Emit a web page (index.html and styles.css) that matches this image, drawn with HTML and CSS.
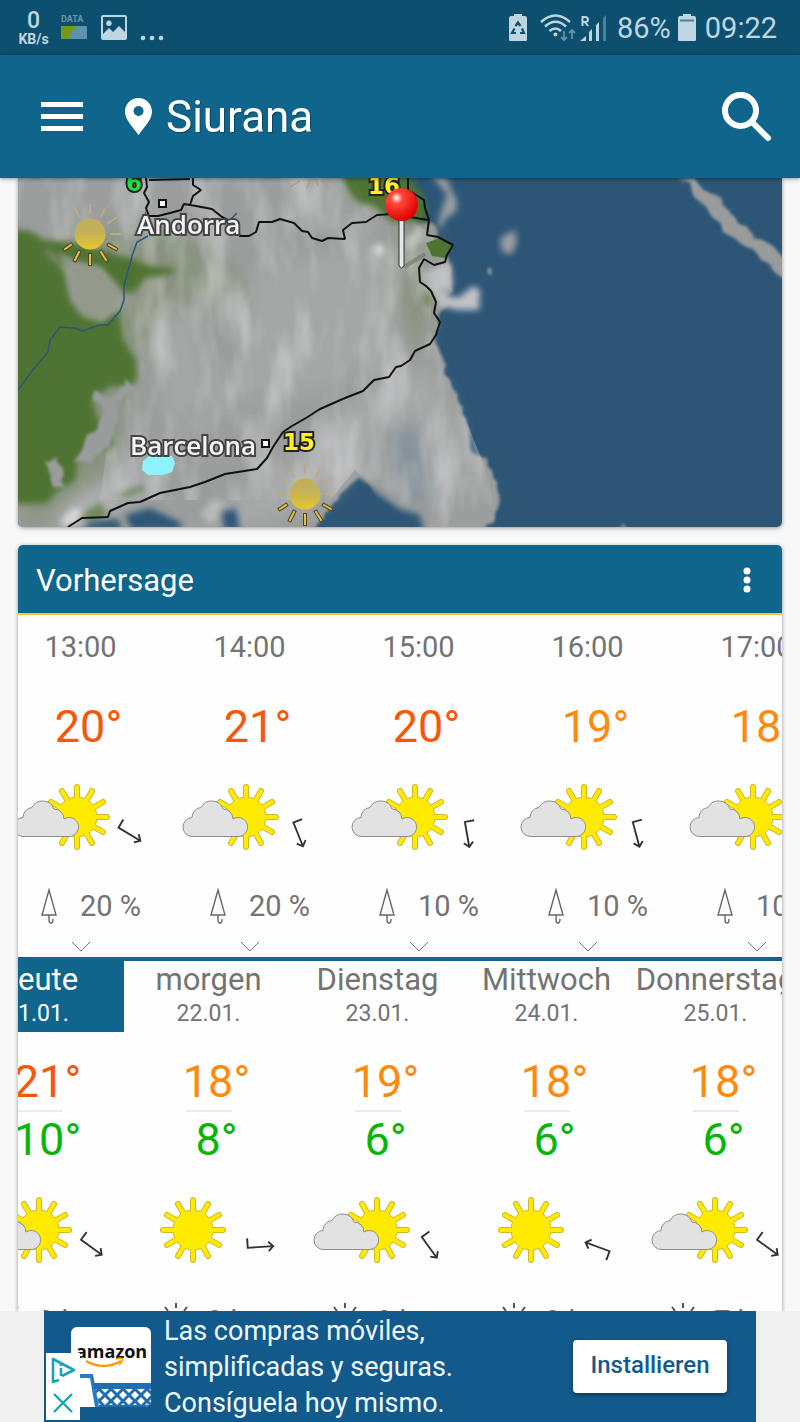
FILE: index.html
```
<!DOCTYPE html>
<html lang="de">
<head>
    <meta charset="UTF-8">
    <meta name="viewport" content="width=device-width, initial-scale=1.0">
    <title>Siurana - Vorhersage</title>
    <link rel="stylesheet" href="styles.css">
</head>
<body>
    <!-- shared icons -->
    <svg class="sprite" aria-hidden="true">
        <symbol id="sun" viewBox="-34 -34 68 68">
            <g id="rays">
                <path id="ray-pair" d="M0 -30V30"/>
                <use href="#ray-pair" transform="rotate(30)"/>
                <use href="#ray-pair" transform="rotate(60)"/>
                <use href="#ray-pair" transform="rotate(90)"/>
                <use href="#ray-pair" transform="rotate(120)"/>
                <use href="#ray-pair" transform="rotate(150)"/>
            </g>
        </symbol>
        <symbol id="clear" viewBox="0 0 100 68">
            <g transform="translate(49 34)">
                <use href="#rays" class="ray-edge"/>
                <circle r="20" class="sun-disc"/>
                <use href="#rays" class="ray-fill"/>
            </g>
        </symbol>
        <symbol id="cloudy" viewBox="0 0 100 68">
            <g transform="translate(64 34)">
                <use href="#rays" class="ray-edge"/>
                <circle r="20" class="sun-disc"/>
                <use href="#rays" class="ray-fill"/>
            </g>
            <path class="cloud" d="M11 53.500A9.500 9.500 0 0 1 10 34.500A10 10 0 0 1 19 24.500A12 12 0 0 1 41 26A10 10 0 0 1 51 36A9.500 9.500 0 1 1 56 53.500Z"/>
        </symbol>
        <symbol id="umbrella" viewBox="0 0 20 37">
            <path d="M10 2L3 27H17ZM10 27V32Q10 35 12 35T14 31" fill="none" stroke="#666" stroke-width="1.400"/>
        </symbol>
        <symbol id="hours" viewBox="0 0 34 37">
            <circle cx="17" cy="19" r="8" fill="none" stroke="#555" stroke-width="2"/>
            <path d="M17 0V5M17 31V36M0 19H5M29 19H34M6 4L9 8M28 4L25 8M6 32L9 28M28 32L24 28" stroke="#555" stroke-width="2"/>
        </symbol>
        <symbol id="arrow" viewBox="-16 -18 32 36" overflow="visible">
            <path d="M-13 -10V0H14M9 -5L14 0L9 5" fill="none" stroke="#333" stroke-width="2"/>
        </symbol>
        <symbol id="chevron" viewBox="0 0 20 11">
            <path d="M1 1L10 10L19 1" fill="none" stroke="#777"/>
        </symbol>
    </svg>

    <div class="statusbar">
        <div class="status-left">
            <div class="speed"><span class="speed-value">0</span><span class="speed-unit">KB/s</span></div>
            <div class="data"><span>DATA</span><i class="data-meter"></i></div>
            <svg width="26" height="26" viewBox="0 0 26 26"><path fill="#bfd6e2" fill-rule="evenodd" d="M2 0H24Q26 0 26 2V23Q26 25 24 25H2Q0 25 0 23V2Q0 0 2 0ZM2 2V19L8 13L12 17L18 11L24 17V2ZM8 5.500A2.800 2.800 0 1 1 7.900 5.500Z"/></svg>
            <svg class="more" width="24" height="6" viewBox="0 0 24 6" fill="#bfd6e2"><circle cx="3" cy="3" r="2.300"/><circle cx="12" cy="3" r="2.300"/><circle cx="21" cy="3" r="2.300"/></svg>
        </div>
        <div class="status-right">
            <svg width="20" height="28" viewBox="0 0 20 28">
                <path fill="#bfd6e2" d="M6 0H14V2H17Q19 2 19 4V26Q19 27 18 27H2Q1 27 1 26V4Q1 2 3 2H6Z"/>
                <path d="M7.500 12L10 8.500L12.500 12M14 14.500L16 19H12M8 19H4L6.500 14.500" fill="none" stroke="#0d4f6e" stroke-width="2.200"/>
            </svg>
            <svg class="wifi" width="36" height="28" viewBox="0 0 36 28" fill="none" stroke="#bfd6e2" stroke-width="2.400">
                <path d="M1 8Q15.500 -5 30 8M5 12.500Q15.500 3 26 12.500M9.500 17Q15.500 12 21 17"/>
                <circle cx="15.500" cy="20.500" r="2" fill="#bfd6e2" stroke="none"/>
                <path stroke="#5e93ad" stroke-width="1.800" d="M24 17V26M21 23L24 26L27 23M32 25V16M29 19L32 16L35 19"/>
            </svg>
            <svg class="signal" width="28" height="28" viewBox="0 0 28 28">
                <path d="M2.500 12V3H5Q8 3 8 5.500T5 8H2.500M5 8L8 12" fill="none" stroke="#bfd6e2" stroke-width="2"/>
                <path d="M0 27L6 22V27ZM9 18L12 15V27H9ZM16 11L19 8V27H16Z" fill="#bfd6e2"/>
                <path d="M23 4L26 1V27H23Z" fill="#47819d"/>
            </svg>
            <span>86%</span>
            <svg class="battery" width="20" height="28" viewBox="0 0 20 28">
                <path fill="#bfd6e2" d="M6 0H14V2H17Q19 2 19 4V26Q19 27 18 27H2Q1 27 1 26V4Q1 2 3 2H6Z"/>
                <path stroke="#47819d" stroke-width="2" d="M3 6.500H17"/>
            </svg>
            <span>09:22</span>
        </div>
    </div>

    <header class="appbar">
        <button class="icon-btn" aria-label="Menü">
            <svg width="42" height="30" viewBox="0 0 42 30" fill="#fff"><path d="M0 0H42V5H0ZM0 12H42V17H0ZM0 24H42V29H0Z"/></svg>
        </button>
        <svg class="place" width="27" height="37" viewBox="0 0 27 37"><path fill="#fff" fill-rule="evenodd" d="M13.500 0C21 0 27 6 27 13.500C27 22 19 29 13.500 37C8 29 0 22 0 13.500C0 6 6 0 13.500 0ZM13.500 8A5 5 0 1 0 13.600 8Z"/></svg>
        <h1>Siurana</h1>
        <button class="icon-btn search" aria-label="Suche">
            <svg width="50" height="50" viewBox="0 0 50 50" fill="none" stroke="#fff" stroke-width="6"><circle cx="18.500" cy="18.500" r="15.500"/><path d="M30 30L46 46" stroke-linecap="round"/></svg>
        </button>
    </header>

    <main>
        <section class="map">
            <svg viewBox="18 178 764 349" preserveAspectRatio="xMidYMid slice">
                <defs>
                    <filter id="soft" x="-20%" y="-20%" width="140%" height="140%"><feGaussianBlur stdDeviation="3"/></filter>
                    <filter id="edge" x="-20%" y="-20%" width="140%" height="140%">
                        <feTurbulence type="fractalNoise" baseFrequency=".06" numOctaves="2" seed="4" result="noise"/>
                        <feDisplacementMap in="SourceGraphic" in2="noise" scale="12" xChannelSelector="R" yChannelSelector="G"/>
                        <feGaussianBlur stdDeviation="1.500"/>
                    </filter>
                    <filter id="softer" x="-40%" y="-40%" width="180%" height="180%"><feGaussianBlur stdDeviation="10"/></filter>
                    <!-- light and dark streaks inside the cloud cover -->
                    <filter id="streaks" x="0" y="0" width="100%" height="100%">
                        <feTurbulence type="fractalNoise" baseFrequency=".035 .012" numOctaves="3" seed="7"/>
                        <feColorMatrix values="0 0 0 0 .8  0 0 0 0 .8  0 0 0 0 .82  2.400 0 0 0 -1"/>
                        <feComposite in2="SourceGraphic" operator="in"/>
                    </filter>
                    <radialGradient id="pin-head" cx=".35" cy=".3" r=".7"><stop offset="0" stop-color="#fff"/><stop offset=".25" stop-color="#ff4a3a"/><stop offset="1" stop-color="#e00000"/></radialGradient>
                    <linearGradient id="hazy-sun" x1="0" y1="0" x2="0" y2="1"><stop offset=".4" stop-color="#c2b15a"/><stop offset="1" stop-color="#e6c62c"/></linearGradient>
                </defs>
                <rect x="18" y="178" width="764" height="349" fill="#2d5676"/>
                <!-- clouds over the sea -->
                <g filter="url(#edge)">
                    <path fill="#9b9e9d" d="M0 165H375L400 215L434 225L450 262L453 290L437 320L436 340L445 370L458 395L468 425L472 450L484 460L494 480L500 498L494 518L480 540H422L400 512L378 500L360 476L350 486L340 500L325 512L310 540H0Z"/>
                </g>
                <g filter="url(#soft)">
                    <path fill="#c1c2c8" d="M420 273L450 262L453 286L438 292L458 298L473 286L480 290L479 310H458L440 306L428 290Z"/>
                    <path fill="#9a9ea3" d="M430 174L448 179L451 190L457 200L456 212L446 218L440 230L438 222L443 206L447 194Z"/>
                </g>
                <path fill="#9a9ea3" filter="url(#soft)" d="M500 238L515 230L517 242L512 254L502 252Z"/>
                <path fill="#999b9c" filter="url(#edge)" d="M680 176L690 179L706 190L722 202L732 214L742 226L756 236L770 247L786 262V280L774 270L758 254L740 241L724 235L716 222L706 208L692 192ZM618 527L621 523L628 527ZM486 270L491 266L490 276L486 278Z"/>
                <!-- land seen through the clouds -->
                <path fill="#7f8d70" opacity=".6" filter="url(#softer)" d="M100 230H190L220 260L260 290L160 320L130 390L115 470L60 520L18 527ZM400 220L440 240L420 262L425 290L432 320L415 350L395 310Z"/>
                <g filter="url(#softer)" fill="#b3b3b5">
                    <path d="M150 320L190 300L210 400L170 430Z" opacity=".4"/>
                    <path d="M250 270L390 240L400 330L330 390L240 400Z" opacity=".4"/>
                    <path d="M380 380L430 370L460 430L400 420L330 500L250 527L200 520L290 460Z" opacity=".5"/>
                    <path d="M50 520L90 490L160 470L130 500L80 530Z"/>
                </g>
                <path fill="#647e95" opacity=".4" filter="url(#softer)" d="M390 430L410 425L435 470L430 500L410 500L395 470Z"/>
                <path filter="url(#streaks)" opacity=".45" d="M18 178H375L400 215L434 235L430 330L445 370L468 425L484 465L494 500L480 527H422L378 495L355 470L330 500L250 500L100 500L120 350L60 260L18 230Z"/>
                <g filter="url(#soft)" fill="#d5d5d5">
                    <circle cx="379" cy="250" r="6"/>
                    <path d="M404 240L418 228L425 236L408 252Z" opacity=".6"/>
                    <path d="M60 522L72 508L85 510L78 522L66 527Z"/>
                    <path d="M200 515L215 498L225 505L212 525Z" opacity=".5"/>
                </g>
                <g fill="#4f7331" filter="url(#soft)">
                    <path d="M0 228L30 231L44 240L48 255L64 270L70 300L82 316L102 322L120 308L123 340L136 360L137 380L130 386L110 386L92 400L98 420L112 424L113 446L78 460L75 480L56 492L48 503L0 505Z"/>
                    <path d="M40 240L74 242L130 258L150 266L174 268L172 274L145 278L134 292L120 294L100 268L60 264Z"/>
                    <path d="M340 172H406L424 198L427 222L392 222L374 206L358 203L348 190Z"/>
                </g>
                <path fill="#4f7331" d="M426 243L440 238L453 246L445 258L432 256Z"/>
                <path fill="#93998b" filter="url(#soft)" d="M56 252L80 262L100 268L122 290L118 306L102 320L86 316L76 300L70 274Z"/>
                <path fill="#9a9c9c" filter="url(#edge)" d="M78 460L87 438L101 424L106 407L93 400L95 392L111 396L127 382L133 386L129 394L121 400L117 420L107 448L91 458ZM47 464L55 460L65 474L61 486L53 484Z"/>
                <path fill="#55793a" opacity=".7" filter="url(#soft)" d="M80 515L100 502L108 515L92 523ZM115 496L140 485L145 490L125 498ZM424 292L431 294L430 308L424 304Z"/>
                <path fill="#2d5676" filter="url(#soft)" d="M82 530L90 522L118 519L122 530ZM125 515L150 508L180 522L182 530H132ZM222 512L236 508L240 530H224ZM318 530L345 505L360 478L376 492L398 508L420 515L425 535H310Z"/>
                <path fill="#8ff3fb" d="M143 461L149 456H172L175 463L172 472L162 475H148L142 470Z"/>
                <!-- river, borders and coast -->
                <path fill="none" stroke="#2d567a" stroke-width="1.500" d="M18 390L32 371L48 352L50 340L60 327L75 328L82 331L100 325L108 325L120 311L124 300V286L132 256L137 242L148 236M230 220L237 213"/>
                <g fill="none" stroke="#111" stroke-width="2" stroke-linejoin="bevel">
                    <path d="M146 178L147 187L144 193L149 202L146 208L149 216L158 216L170 213L181 210L184 204L196 206L212 209L222 217L232 222L240 236L249 236L256 232L259 222L272 222L280 219L294 223L302 231L308 232L312 238L322 241L328 238L345 239L343 230L352 223L366 222L377 215L392 214L428 220M193 178V185L201 190L193 196L190 205M149 180L190 179"/>
                    <path d="M408 178V190L424 200L425 208L429 220L427 235L438 237L453 245L447 255L445 262L434 265L424 259L419 268L420 282L426 286L431 291L436 302L434 313L440 322L436 335L430 344L415 351L410 360L401 366L396 367L389 377L374 380L363 391L345 398L320 409L306 418L292 426L283 432L273 447L267 458L257 469L225 474L205 482L190 487L160 493L140 502L128 503L110 511L108 517L82 518L68 527"/>
                </g>
                <path d="M404 267L425 254" stroke="#52614c" stroke-width="4" opacity=".4"/>
                <!-- suns on the map -->
                <g id="map-sun">
                    <g transform="translate(90 234)" stroke-linecap="square">
                        <path stroke="#b9ab86" stroke-width="2" d="M-21 0H-29M21 0H30M-18 -11L-25 -15M18 -11L26 -16M-11 -18L-15 -25M11 -18L15 -25M0 -21V-29"/>
                        <path stroke="#55451a" stroke-width="4" d="M-19 11L-25 15M19 11L26 15M-11 18L-15 26M11 18L16 26M0 21V30"/>
                        <path stroke="#e2bd5c" stroke-width="2" d="M-19 11L-25 15M19 11L26 15M-11 18L-15 26M11 18L16 26M0 21V30"/>
                        <circle r="15.500" fill="url(#hazy-sun)"/>
                    </g>
                </g>
                <use href="#map-sun" x="215" y="260"/>
                <path stroke="#b49b72" stroke-width="2" opacity=".7" d="M290 187L300 181M307 188L310 179M318 186L316 179M326 186L322 180M336 185L330 180"/>
                <rect x="159" y="200" width="7" height="7" fill="#fff" stroke="#111" stroke-width="2"/>
                <rect x="262" y="440" width="7" height="7" fill="#fff" stroke="#111" stroke-width="2"/>
                <g class="map-label">
                    <text x="137" y="234">Andorra</text>
                    <text x="130" y="455">Barcelona</text>
                </g>
                <g class="map-temp">
                    <text x="283" y="450">15</text>
                    <text x="368" y="194">16</text>
                    <text x="126" y="191" class="cold">6</text>
                </g>
                <path d="M399 215H404V266L401.500 268L399 266Z" fill="#e8e8e8" stroke="#333"/>
                <circle cx="401.500" cy="204.500" r="16.500" fill="url(#pin-head)"/>
            </svg>
        </section>

        <section class="card">
            <div class="card-head">
                <h2>Vorhersage</h2>
                <button class="icon-btn" aria-label="Mehr">
                    <svg width="24" height="28" viewBox="0 0 24 28" fill="#fff"><circle cx="12" cy="4" r="3.500"/><circle cx="12" cy="13" r="3.500"/><circle cx="12" cy="22" r="3.500"/></svg>
                </button>
            </div>

            <div class="strip hourly">
                <div class="col">
                    <div class="time">13:00</div>
                    <div class="temp hot">20°</div>
                    <div class="sky"><svg class="weather"><use href="#cloudy"/></svg><svg class="wind" viewBox="-16 -18 32 36"><g transform="rotate(31)"><use href="#arrow" x="-16" y="-18" width="32" height="36"/></g></svg></div>
                    <div class="rain"><svg><use href="#umbrella"/></svg>20 %</div>
                    <svg class="chevron"><use href="#chevron"/></svg>
                </div>
                <div class="col">
                    <div class="time">14:00</div>
                    <div class="temp hot">21°</div>
                    <div class="sky"><svg class="weather"><use href="#cloudy"/></svg><svg class="wind" viewBox="-16 -18 32 36"><g transform="rotate(68)"><use href="#arrow" x="-16" y="-18" width="32" height="36"/></g></svg></div>
                    <div class="rain"><svg><use href="#umbrella"/></svg>20 %</div>
                    <svg class="chevron"><use href="#chevron"/></svg>
                </div>
                <div class="col">
                    <div class="time">15:00</div>
                    <div class="temp hot">20°</div>
                    <div class="sky"><svg class="weather"><use href="#cloudy"/></svg><svg class="wind" viewBox="-16 -18 32 36"><g transform="rotate(80)"><use href="#arrow" x="-16" y="-18" width="32" height="36"/></g></svg></div>
                    <div class="rain"><svg><use href="#umbrella"/></svg>10 %</div>
                    <svg class="chevron"><use href="#chevron"/></svg>
                </div>
                <div class="col">
                    <div class="time">16:00</div>
                    <div class="temp warm">19°</div>
                    <div class="sky"><svg class="weather"><use href="#cloudy"/></svg><svg class="wind" viewBox="-16 -18 32 36"><g transform="rotate(75)"><use href="#arrow" x="-16" y="-18" width="32" height="36"/></g></svg></div>
                    <div class="rain"><svg><use href="#umbrella"/></svg>10 %</div>
                    <svg class="chevron"><use href="#chevron"/></svg>
                </div>
                <div class="col">
                    <div class="time">17:00</div>
                    <div class="temp warm">18°</div>
                    <div class="sky"><svg class="weather"><use href="#cloudy"/></svg></div>
                    <div class="rain"><svg><use href="#umbrella"/></svg>10 %</div>
                    <svg class="chevron"><use href="#chevron"/></svg>
                </div>
            </div>

            <div class="strip daily">
                <div class="col">
                    <div class="day active"><span class="name">Heute</span><span class="date">21.01.</span></div>
                    <div class="temp hot">21°</div>
                    <hr>
                    <div class="temp low">10°</div>
                    <div class="sky"><svg class="weather"><use href="#cloudy"/></svg><svg class="wind" viewBox="-16 -18 32 36"><g transform="rotate(36)"><use href="#arrow" x="-16" y="-18" width="32" height="36"/></g></svg></div>
                    <div class="rain"><svg><use href="#hours"/></svg>9 h</div>
                </div>
                <div class="col">
                    <div class="day"><span class="name">morgen</span><span class="date">22.01.</span></div>
                    <div class="temp warm">18°</div>
                    <hr>
                    <div class="temp low">8°</div>
                    <div class="sky"><svg class="weather"><use href="#clear"/></svg><svg class="wind" viewBox="-16 -18 32 36"><g transform="rotate(-4)"><use href="#arrow" x="-16" y="-18" width="32" height="36"/></g></svg></div>
                    <div class="rain"><svg><use href="#hours"/></svg>9 h</div>
                </div>
                <div class="col">
                    <div class="day"><span class="name">Dienstag</span><span class="date">23.01.</span></div>
                    <div class="temp warm">19°</div>
                    <hr>
                    <div class="temp low">6°</div>
                    <div class="sky"><svg class="weather"><use href="#cloudy"/></svg><svg class="wind" viewBox="-16 -18 32 36"><g transform="rotate(54)"><use href="#arrow" x="-16" y="-18" width="32" height="36"/></g></svg></div>
                    <div class="rain"><svg><use href="#hours"/></svg>8 h</div>
                </div>
                <div class="col">
                    <div class="day"><span class="name">Mittwoch</span><span class="date">24.01.</span></div>
                    <div class="temp warm">18°</div>
                    <hr>
                    <div class="temp low">6°</div>
                    <div class="sky"><svg class="weather"><use href="#clear"/></svg><svg class="wind" viewBox="-16 -18 32 36"><g transform="rotate(200)"><use href="#arrow" x="-16" y="-18" width="32" height="36"/></g></svg></div>
                    <div class="rain"><svg><use href="#hours"/></svg>9 h</div>
                </div>
                <div class="col">
                    <div class="day"><span class="name">Donnerstag</span><span class="date">25.01.</span></div>
                    <div class="temp warm">18°</div>
                    <hr>
                    <div class="temp low">6°</div>
                    <div class="sky"><svg class="weather"><use href="#cloudy"/></svg><svg class="wind" viewBox="-16 -18 32 36"><g transform="rotate(36)"><use href="#arrow" x="-16" y="-18" width="32" height="36"/></g></svg></div>
                    <div class="rain"><svg><use href="#hours"/></svg>7 h</div>
                </div>
            </div>
        </section>
    </main>

    <aside class="ad">
        <div class="ad-inner">
            <svg class="ad-logo" width="80" height="80" viewBox="0 0 80 80">
                <defs>
                    <clipPath id="logo-clip"><rect width="80" height="80" rx="6"/></clipPath>
                    <pattern id="mesh" width="12" height="12" patternUnits="userSpaceOnUse" x="4" y="62"><path d="M0 0L12 12M12 0L0 12" stroke="#1f6cb0" stroke-width="3"/></pattern>
                </defs>
                <g clip-path="url(#logo-clip)">
                    <rect width="80" height="80" fill="#fff"/>
                    <path d="M0 47H22L28 80H24L19 51H0Z" fill="#2a7ac0"/>
                    <path d="M22 56H80V62H23Z" fill="#1f6cb0"/>
                    <path d="M24 60H80V79H28Z" fill="url(#mesh)"/>
                    <path d="M28 78H80V80H28Z" fill="#1f6cb0"/>
                </g>
                <text x="5" y="31" class="logo-text">amazon</text>
                <path d="M15 34Q33 44 50 34" fill="none" stroke="#f90" stroke-width="2.500"/>
                <path d="M45 32Q51 30 51.500 32T48 38" fill="none" stroke="#f90" stroke-width="1.600"/>
            </svg>
            <div class="ad-choices">
                <svg width="26" height="28" viewBox="0 0 26 28" fill="none" stroke="#1ba3b8" stroke-width="2.600"><path d="M9 24L3 26V3L24 14L12 20" stroke-linejoin="round"/><path d="M11 12V20M11 7V10"/></svg>
                <button class="icon-btn" aria-label="Anzeige schließen"><svg width="22" height="22" viewBox="0 0 22 22" stroke="#1ba3b8" stroke-width="2.400"><path d="M2 2L20 20M20 2L2 20"/></svg></button>
            </div>
            <p class="ad-text">Las compras móviles,<br>simplificadas y seguras.<br>Consíguela hoy mismo.</p>
            <button class="install">Installieren</button>
        </div>
    </aside>
</body>
</html>
```
FILE: styles.css
```
* { box-sizing: border-box; }
body { font-family: Roboto, "Liberation Sans", sans-serif; display: flex; flex-direction: column; height: 100vh; margin: 0; background: #f8f8f8; color: #737373; overflow: hidden; }
h1, h2, p { margin: 0; font-weight: 400; }
svg { display: block; flex: none; }
.sprite { display: none; }
.icon-btn { display: block; background: none; border: none; padding: 0; cursor: pointer; }

.statusbar { display: flex; justify-content: space-between; align-items: center; flex: none; height: 55px; padding: 0 23px 0 18px; background: #0d4f6e; color: #bfd6e2; font-size: 29px; }
.status-left, .status-right { display: flex; align-items: center; }
.speed { display: flex; flex-direction: column; align-items: center; width: 31px; }
.speed-value { font-size: 23px; line-height: 22px; font-weight: 500; }
.speed-unit { font-size: 14px; line-height: 14px; font-weight: 700; }
.data { display: flex; flex-direction: column; gap: 1px; margin: 0 14px 4px 12px; font-size: 9px; line-height: 12px; font-weight: 700; color: #6c95a9; }
.data-meter { width: 26px; height: 13px; background: linear-gradient(120deg, #779913 42%, #5e92ae 44%); }
.more { margin: 20px 0 0 13px; }
.wifi { margin-left: 12px; }
.signal { margin: 0 9px 0 4px; }
.battery { margin: 0 8px 0 6px; }

.appbar { display: flex; align-items: center; flex: none; height: 123px; padding: 0 28px 0 41px; background: #10658c; color: #fff; z-index: 1; box-shadow: 0 1px 4px rgba(0, 0, 0, 0.4); }
.appbar h1 { font-size: 44px; line-height: 52px; margin-left: 14px; text-shadow: 1px 1px 1px rgba(0, 0, 0, 0.3); }
.place { margin-left: 42px; }
.search { margin-left: auto; }

main { display: flex; flex-direction: column; gap: 18px; flex: 1; min-height: 0; padding: 0 18px; overflow: hidden; }
.map { flex: none; border-radius: 0 0 5px 5px; box-shadow: 0 1px 4px rgba(0, 0, 0, 0.4); overflow: hidden; }
.map svg { width: 100%; height: auto; }
.map-label { font-family: "Open Sans", sans-serif; font-size: 26px; font-weight: 600; fill: #f4f4f4; stroke: #444; stroke-width: 4px; paint-order: stroke; }
.map-temp { font-family: "DejaVu Sans", sans-serif; font-size: 23px; font-weight: 700; fill: #fff02a; stroke: #222; stroke-width: 4px; paint-order: stroke; }
.map-temp .cold { fill: #1ce63a; }

.card { flex: none; background: #fefefe; border-radius: 5px; box-shadow: 0 1px 4px rgba(0, 0, 0, 0.4); overflow: hidden; }
.card-head { display: flex; justify-content: space-between; align-items: center; padding: 18px 23px 14px 18px; background: #10658c; border-bottom: 2px solid #f2c53d; color: #fff; }
.card-head h2 { font-size: 31px; line-height: 36px; }

.strip { display: flex; overflow: hidden; }
.col { flex: none; width: 169px; }
.hourly { padding-top: 15px; border-bottom: 4px solid #10658c; }
.hourly .col:first-child { margin-left: -22px; }
.daily .col:first-child { margin-left: -63px; }
.time { font-size: 29px; line-height: 34px; text-align: center; }
/* the degree sign hangs to the right of the centred number */
.temp { font-size: 45px; line-height: 52px; text-align: center; padding-left: 16px; }
.hourly .temp { margin-top: 37px; }
.hot { color: #f6570b; }
.warm { color: #ff8a0c; }
.low { color: #08b508; }
.sky { display: flex; align-items: flex-end; margin-top: 30px; padding-left: 17px; }
.daily .sky { padding-left: 20px; }
.weather { width: 100px; height: 68px; }
.wind { width: 32px; height: 34px; overflow: visible; }
.rain { display: flex; align-items: center; margin-top: 36px; padding-left: 35px; font-size: 29px; line-height: 38px; }
.rain svg { width: 36px; height: 37px; margin-right: 13px; }
.daily .rain { margin-top: 38px; padding-left: 34px; }
.chevron { width: 20px; height: 11px; margin: 16px auto 5px; }
.day { display: flex; flex-direction: column; align-items: center; padding: 1px 0 2px; margin-bottom: 24px; }
.day.active { background: #10658c; color: #fff; padding-right: 5px; }
.name { font-size: 31px; line-height: 36px; }
.date { font-size: 23px; line-height: 32px; }
.daily hr { width: 46px; height: 2px; margin: 2px auto; border: none; background: #ececec; }

.ray-edge { stroke: #cdb92a; stroke-width: 6px; stroke-linecap: round; }
.ray-fill { stroke: #ffea00; stroke-width: 4px; stroke-linecap: round; }
.sun-disc { fill: #ffea00; stroke: #cdb92a; stroke-width: 1px; }
.cloud { fill: #e2e2e2; stroke: #8c8c8c; stroke-width: 1px; }

.ad { display: flex; justify-content: center; flex: none; height: 111px; background: #f0f0f0; z-index: 1; }
.ad-inner { position: relative; display: flex; width: 712px; padding: 2px 29px 0 27px; background: #125a8c; color: #f0f8ff; }
.ad-logo { margin-top: 14px; }
.logo-text { font-family: "Open Sans", sans-serif; font-size: 18px; font-weight: 700; fill: #111; }
.ad-choices { position: absolute; left: 2px; bottom: 2px; display: flex; flex-direction: column; align-items: center; justify-content: space-between; width: 34px; height: 67px; padding: 3px 0 6px; background: #fff; }
.ad-text { margin-left: 13px; font-size: 27px; line-height: 36px; }
.install { align-self: flex-start; margin: 27px 0 0 auto; width: 154px; height: 53px; padding: 0 0 3px; background: #fff; color: #125a8c; border: none; border-radius: 4px; box-shadow: 0 2px 4px rgba(0, 0, 0, 0.4); font-family: inherit; font-size: 24px; font-weight: 500; cursor: pointer; }
```
